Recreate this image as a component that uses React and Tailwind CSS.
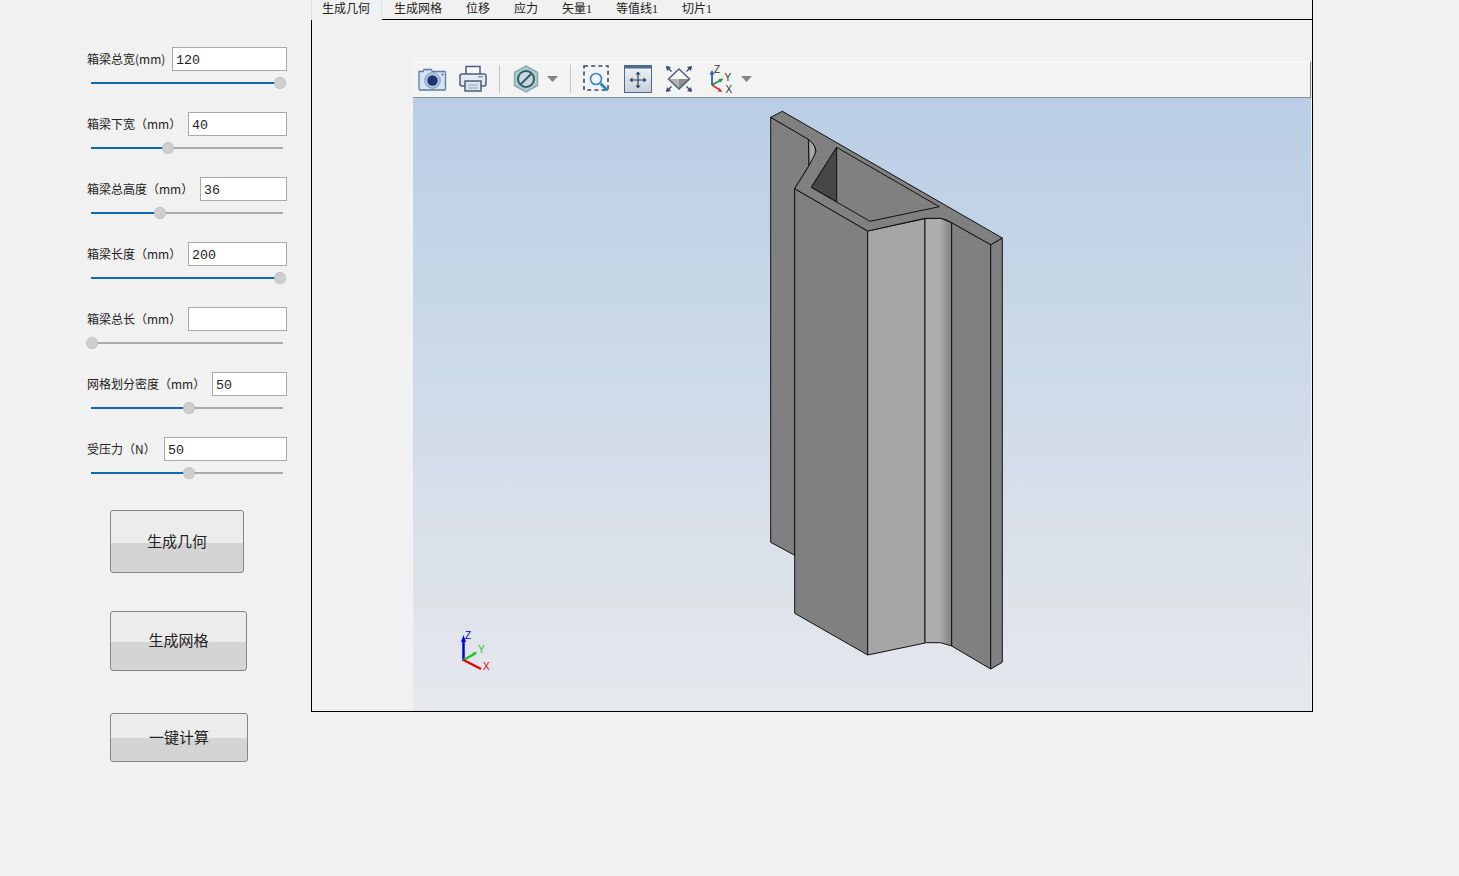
const cjk = { fontFamily: '"Noto Sans CJK SC", "Liberation Sans", sans-serif' }
const tabFont = { fontFamily: '"Liberation Serif", "Noto Sans CJK SC", serif' }

const fields = [
  { label: '箱梁总宽(mm)', value: '120', inputClass: 'w-[115px]', handle: 189 },
  { label: '箱梁下宽（mm）', value: '40', inputClass: 'w-[99px]', handle: 77 },
  { label: '箱梁总高度（mm）', value: '36', inputClass: 'w-[87px]', handle: 69 },
  { label: '箱梁长度（mm）', value: '200', inputClass: 'w-[99px]', handle: 189 },
  { label: '箱梁总长（mm）', value: '', inputClass: 'w-[99px]', handle: 1 },
  { label: '网格划分密度（mm）', value: '50', inputClass: 'w-[75px]', handle: 98 },
  { label: '受压力（N）', value: '50', inputClass: 'w-[123px]', handle: 98 },
]

const tabs = ['生成网格', '位移', '应力', '矢量1', '等值线1', '切片1']

function Field({ label, value, inputClass, handle }) {
  return (
    <div className="h-[65px]">
      <div className="flex h-6 items-center justify-between">
        <span className="text-[12px] whitespace-nowrap text-[#222]" style={cjk}>{label}</span>
        <input
          readOnly
          value={value}
          className={`${inputClass} h-6 border border-[#a9a9a9] bg-white px-[3px] pt-[2px] font-['Liberation_Mono',monospace] text-[13.33px] text-[#222] outline-none`}
        />
      </div>
      <div className="mt-[6px] ml-1 flex h-3 w-[192px] items-center">
        <div className="h-[2px] bg-[#0f67b5]" style={{ width: handle }} />
        <div className="relative -mx-[6px] h-3 w-3 shrink-0 rounded-full border border-dotted border-[#b0b0b0] bg-[#cfcfcf]" />
        <div className="h-[2px] flex-1 bg-[#ababab]" />
      </div>
    </div>
  )
}

function ActionButton({ children, className }) {
  return (
    <button
      className={`${className} block rounded-[3px] border border-[#868686] bg-[linear-gradient(#ececec_52%,#d4d4d4_52%)] pb-px text-[15px] text-[#222]`}
      style={cjk}
    >
      {children}
    </button>
  )
}

function CameraIcon() {
  return (
    <svg width="29" height="25" viewBox="0 0 29 25" className="ml-[5px] shrink-0">
      <path d="M1 5.500h4l1-2h7l1.500 2h12a1 1 0 0 1 1 1V23a1 1 0 0 1-1 1H2a1 1 0 0 1-1-1z" fill="#d6e2f3" stroke="#5a7da3" strokeWidth="1.300" />
      <circle cx="14.500" cy="14.500" r="7.800" fill="#b5c6de" stroke="#7f98ba" />
      <circle cx="14.500" cy="14.500" r="5.200" fill="#1c3573" />
      <circle cx="24.500" cy="8.500" r="1" fill="#3d5f8c" />
    </svg>
  )
}

function PrinterIcon() {
  return (
    <svg width="28" height="27" viewBox="0 0 28 27" className="ml-3 shrink-0">
      <path d="M7 9V1.500h14V9" fill="#f8f8f8" stroke="#47607f" strokeWidth="1.500" />
      <rect x="1" y="9" width="26" height="12" rx="2" fill="#e6ebf2" stroke="#47607f" strokeWidth="1.500" />
      <rect x="19" y="11" width="5" height="1.500" fill="#8b9db5" />
      <rect x="6" y="16" width="16" height="10" fill="#dfe4ec" stroke="#47607f" strokeWidth="1.500" />
      <path d="M9 20h10M9 23h10" stroke="#8f9fb4" strokeWidth="1.200" />
    </svg>
  )
}

function HexIcon() {
  return (
    <svg width="26" height="28" viewBox="0 0 26 28" className="ml-[13px] shrink-0">
      <path d="M13 1l11.500 6.500v13L13 27 1.500 20.500v-13z" fill="#b3cbd0" stroke="#8aaab0" strokeWidth="1.500" />
      <circle cx="13" cy="14" r="8" fill="#c9d8dc" stroke="#2f5f6d" strokeWidth="2" />
      <path d="M7.500 19.500l11-11" stroke="#2f5f6d" strokeWidth="2" />
    </svg>
  )
}

function Caret({ className }) {
  return (
    <svg width="11" height="6" viewBox="0 0 11 6" className={`${className} shrink-0`}>
      <path d="M0 0h11L5.500 6z" fill="#858585" />
    </svg>
  )
}

function ZoomBoxIcon() {
  return (
    <svg width="27" height="27" viewBox="0 0 27 27" className="ml-3 shrink-0">
      <rect x="1" y="1" width="24" height="24" fill="none" stroke="#34496a" strokeWidth="1.600" strokeDasharray="4 3.200" />
      <circle cx="13" cy="14" r="5.500" fill="#eef3f8" stroke="#3b83b8" strokeWidth="1.600" />
      <path d="M17.500 18.500l7 7" stroke="#2a7fbf" strokeWidth="2.600" />
    </svg>
  )
}

function FitIcon() {
  return (
    <svg width="28" height="28" viewBox="0 0 28 28" className="ml-[14px] shrink-0">
      <defs>
        <linearGradient id="fitBg" x1="0" y1="0" x2="0" y2="1">
          <stop offset="0" stopColor="#f2f4f8" />
          <stop offset="1" stopColor="#c9ced9" />
        </linearGradient>
      </defs>
      <rect x="0.500" y="0.500" width="27" height="27" fill="url(#fitBg)" stroke="#4a6a8f" />
      <rect x="0.500" y="0.500" width="27" height="3" fill="#4a6a8f" />
      <path d="M14 8v14M7 15h14" stroke="#263f63" strokeWidth="1.200" />
      <path d="M14 6.500l-2.500 3h5zM14 23.500l-2.500-3h5zM5.500 15l3-2.500v5zM22.500 15l-3-2.500v5z" fill="#263f63" />
    </svg>
  )
}

function DiamondIcon() {
  return (
    <svg width="28" height="28" viewBox="0 0 28 28" className="ml-[13px] shrink-0">
      <path d="M14 4L24.500 14H3.500z" fill="#f6f6f6" />
      <path d="M3.500 14H14V24z" fill="#b5b5b5" />
      <path d="M24.500 14H14V24z" fill="#8f8f8f" />
      <path d="M14 4L24.500 14 14 24 3.500 14z" fill="none" stroke="#50627a" strokeWidth="1.500" />
      <path d="M1 1l5 1L2 6zM27 1l-5 1 4 4zM1 27l5-1-4-4zM27 27l-5-1 4-4z" fill="#2c4a73" />
      <path d="M2 2l4.500 4.500M26 2l-4.500 4.500M2 26l4.500-4.500M26 26l-4.500-4.500" stroke="#2c4a73" strokeWidth="1.400" />
    </svg>
  )
}

function AxesIcon() {
  return (
    <svg width="26" height="32" viewBox="0 -2 26 32" className="ml-4 shrink-0">
      <path d="M3 20V8" stroke="#2a5fae" strokeWidth="1.800" />
      <path d="M3 5l-2.500 4.500h5z" fill="#2a5fae" />
      <path d="M3 20l9-5" stroke="#1f9048" strokeWidth="1.800" />
      <path d="M14.500 13.500l-5 .5 2 3.500z" fill="#1f9048" />
      <path d="M3 20l8 5" stroke="#d8343a" strokeWidth="1.800" />
      <path d="M13.500 27l-4.800-.5 2-3.500z" fill="#d8343a" />
      <text x="5" y="8" fontSize="10" fontFamily="Liberation Sans" fill="#333">Z</text>
      <text x="15.500" y="16" fontSize="10" fontFamily="Liberation Sans" fill="#333">Y</text>
      <text x="16.500" y="27.500" fontSize="10" fontFamily="Liberation Sans" fill="#333">X</text>
    </svg>
  )
}

function Separator({ className }) {
  return <div className={`${className} h-7 w-px shrink-0 bg-[#c6c6c6]`} />
}

// viewBox is in page coordinates so the points can be read off the picture
function Model() {
  const edge = { stroke: '#111', strokeWidth: 1, strokeLinejoin: 'round' }
  return (
    <svg viewBox="413 98 898 613" className="block h-full w-full">
      <defs>
        <linearGradient id="fillet" x1="0" y1="0" x2="1" y2="0">
          <stop offset="0" stopColor="#aeaeae" />
          <stop offset="0.550" stopColor="#adadad" />
          <stop offset="1" stopColor="#7e7e7e" />
        </linearGradient>
        <linearGradient id="smallFillet" x1="0" y1="0" x2="1" y2="0">
          <stop offset="0" stopColor="#7f7f7f" />
          <stop offset="0.500" stopColor="#b5b5b5" />
          <stop offset="1" stopColor="#808080" />
        </linearGradient>
      </defs>

      <path d="M770.700 117.300V542.300L794.700 555.300V188.700L809 165.700V139.300z" fill="#808080" {...edge} />
      <path d="M808.300 139.300Q816 145 816 152Q815 158 809 165.700z" fill="url(#smallFillet)" {...edge} />
      <path d="M794.700 188.700V613.300L867.700 655V231z" fill="#808080" {...edge} />
      <path d="M867.700 231V655L925 643V218.700z" fill="#a6a6a6" {...edge} />
      <path d="M925 218.700V642.700H940.700L951.700 646V222.700L940.700 218.300z" fill="url(#fillet)" {...edge} />
      <path d="M951.700 222.700V646L990.700 669V244.700z" fill="#808080" {...edge} />
      <path d="M990.700 244.700V669L1002.300 662.300V238z" fill="#808080" {...edge} />

      <path
        d="M770.700 117.300L782.300 111.300L1002.300 238L990.700 244.700L951.700 222.700Q946 219 940.700 218.300H925L867.700 231L794.700 188.700L809 165.700L816 152Q816 145 808.300 139.300z"
        fill="#808080"
        {...edge}
      />
      <path d="M836.700 147.300L939.300 206.700L870 221.300L811.300 187.300z" fill="#808080" {...edge} />
      <path d="M836.700 147.300L811.300 187.300L836.700 201.700z" fill="#474747" {...edge} />

      <path d="M463.500 661V640" stroke="#0000e6" strokeWidth="2.500" />
      <path d="M463.500 635l-2.500 7h5z" fill="#0000e6" />
      <path d="M463.500 660L476 653" stroke="#1ec81e" strokeWidth="2.500" />
      <path d="M477 652l-4.500 .5 1.500 3z" fill="#1ec81e" />
      <path d="M463.500 660L481 669" stroke="#e60000" strokeWidth="2.500" />
      <text x="465" y="639" fontSize="10" fontFamily="Liberation Sans" fill="#0000e6">Z</text>
      <text x="478" y="653" fontSize="10" fontFamily="Liberation Sans" fill="#1ec81e">Y</text>
      <text x="483" y="670" fontSize="10" fontFamily="Liberation Sans" fill="#e60000">X</text>
    </svg>
  )
}

export default function App() {
  return (
    <div className="flex h-[876px] w-[1459px] overflow-hidden bg-[#f1f1f1]">
      <div className="w-[311px] shrink-0 pt-[47px] pr-6 pl-[87px]">
        {fields.map((f) => (
          <Field key={f.label} {...f} />
        ))}
        <div className="mt-2 pl-[23px]">
          <ActionButton className="h-[63px] w-[134px]">生成几何</ActionButton>
          <ActionButton className="mt-[38px] h-[60px] w-[137px]">生成网格</ActionButton>
          <ActionButton className="mt-[42px] h-[49px] w-[138px]">一键计算</ActionButton>
        </div>
      </div>

      <div className="w-[1002px] shrink-0">
        <div className="flex h-5 text-[12px] text-[#222]" style={tabFont}>
          <div className="w-[71px] border-x border-[#dcdcdc] pl-[10px] leading-[18px]">生成几何</div>
          {tabs.map((t) => (
            <div key={t} className="border-b border-black px-3 leading-[18px] whitespace-nowrap">{t}</div>
          ))}
          <div className="flex-1 border-r border-b border-black" />
        </div>
        <div className="flex h-[692px] flex-col border-x border-b border-black pt-[41px] pr-px pl-[101px]">
          <div className="flex h-[37px] shrink-0 items-center border-t border-r border-b border-t-white border-r-[#808080] border-b-[#8f8f8f] bg-[#f3f3f3] pb-[2px]">
            <CameraIcon />
            <PrinterIcon />
            <Separator className="ml-3" />
            <HexIcon />
            <Caret className="ml-2" />
            <Separator className="ml-3" />
            <ZoomBoxIcon />
            <FitIcon />
            <DiamondIcon />
            <AxesIcon />
            <Caret className="ml-[6px]" />
          </div>
          <div className="min-h-0 flex-1 bg-[linear-gradient(#b9cee5,#e6e8ec)]">
            <Model />
          </div>
        </div>
      </div>
    </div>
  )
}
